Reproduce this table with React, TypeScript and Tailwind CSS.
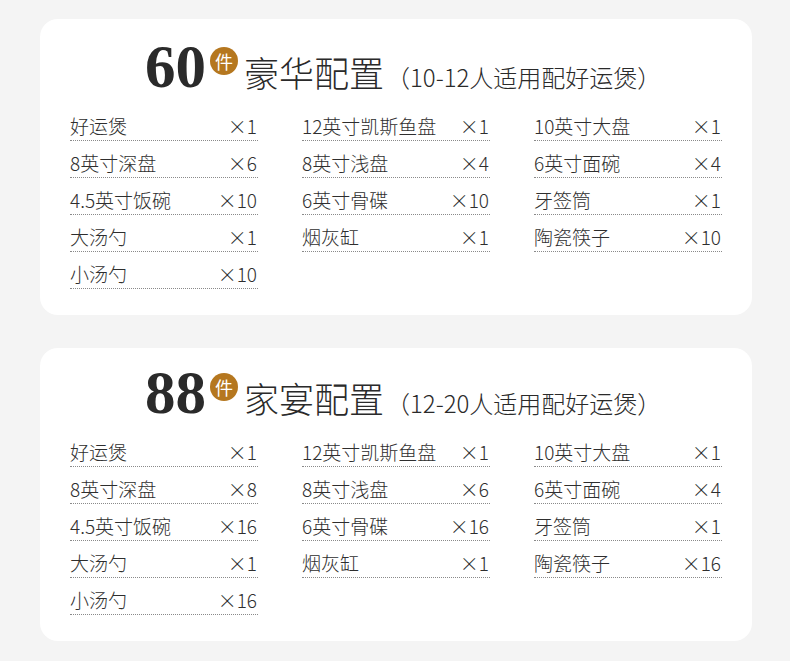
const cjk = "font-['Noto_Sans_CJK_SC','Noto_Sans',sans-serif]";

type Item = { name: string; qty: string };

const sets = [
  {
    count: "60",
    name: "豪华配置",
    note: "（10-12人适用配好运煲）",
    pad: "pt-[17px]",
    columns: [
      [
        { name: "好运煲", qty: "×1" },
        { name: "8英寸深盘", qty: "×6" },
        { name: "4.5英寸饭碗", qty: "×10" },
        { name: "大汤勺", qty: "×1" },
        { name: "小汤勺", qty: "×10" },
      ],
      [
        { name: "12英寸凯斯鱼盘", qty: "×1" },
        { name: "8英寸浅盘", qty: "×4" },
        { name: "6英寸骨碟", qty: "×10" },
        { name: "烟灰缸", qty: "×1" },
      ],
      [
        { name: "10英寸大盘", qty: "×1" },
        { name: "6英寸面碗", qty: "×4" },
        { name: "牙签筒", qty: "×1" },
        { name: "陶瓷筷子", qty: "×10" },
      ],
    ],
  },
  {
    count: "88",
    name: "家宴配置",
    note: "（12-20人适用配好运煲）",
    pad: "pt-[14px]",
    columns: [
      [
        { name: "好运煲", qty: "×1" },
        { name: "8英寸深盘", qty: "×8" },
        { name: "4.5英寸饭碗", qty: "×16" },
        { name: "大汤勺", qty: "×1" },
        { name: "小汤勺", qty: "×16" },
      ],
      [
        { name: "12英寸凯斯鱼盘", qty: "×1" },
        { name: "8英寸浅盘", qty: "×6" },
        { name: "6英寸骨碟", qty: "×16" },
        { name: "烟灰缸", qty: "×1" },
      ],
      [
        { name: "10英寸大盘", qty: "×1" },
        { name: "6英寸面碗", qty: "×4" },
        { name: "牙签筒", qty: "×1" },
        { name: "陶瓷筷子", qty: "×16" },
      ],
    ],
  },
];

function Row({ item }: { item: Item }) {
  return (
    <div className="flex items-baseline justify-between border-b border-dotted border-[#8a8a8a] pt-[6px] pb-[2px] text-[19px] font-light leading-[24px] text-[#2e2e2e]">
      <span>{item.name}</span>
      <span className="pr-[1px]">{item.qty}</span>
    </div>
  );
}

export default function App() {
  return (
    <div className={`min-h-[661px] bg-[#f4f4f4] pt-[19px] pb-[21px] ${cjk}`}>
      <div className="ml-[40px] flex w-[712px] flex-col gap-[33px]">
        {sets.map((set) => (
          <section key={set.count} className={`rounded-[18px] bg-white px-[30px] pb-[26px] ${set.pad}`}>
            {/* Title */}
            <div className="flex items-baseline pl-[75px]">
              <div className="flex items-start">
                <span className="font-['Liberation_Serif',serif] text-[61px] font-bold leading-none text-[#2a2a2a]">
                  {set.count}
                </span>
                <span className="mt-[11px] ml-[4px] flex h-[28px] w-[28px] items-center justify-center rounded-full bg-[#b5771f] text-[18px] leading-none text-white">
                  件
                </span>
              </div>
              <span className="ml-[6px] text-[35px] font-light leading-none text-[#2a2a2a]">{set.name}</span>
              <span className="ml-[2px] text-[24px] font-light leading-none text-[#2a2a2a]">{set.note}</span>
            </div>

            {/* Items */}
            <div className="mt-[11px] grid grid-cols-3 gap-x-[44px]">
              {set.columns.map((col, i) => (
                <div key={i} className="flex flex-col gap-[4px]">
                  {col.map((item) => (
                    <Row key={item.name} item={item} />
                  ))}
                </div>
              ))}
            </div>
          </section>
        ))}
      </div>
    </div>
  );
}
